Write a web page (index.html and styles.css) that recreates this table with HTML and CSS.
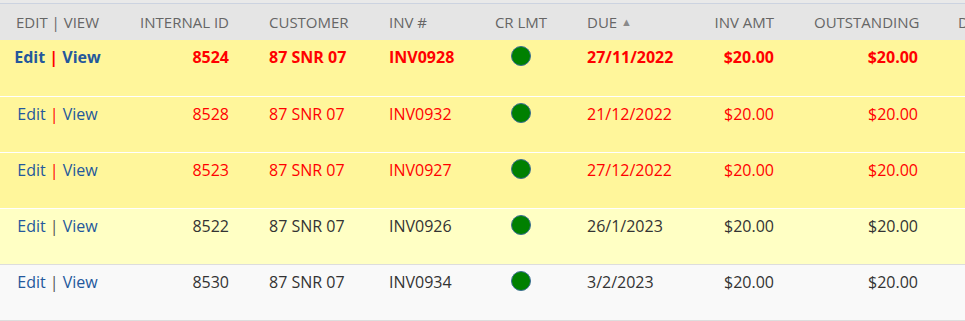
FILE: index.html
```html
<!DOCTYPE html>
<html>
<head>
<meta charset="utf-8">
<link rel="stylesheet" href="styles.css">
</head>
<body>
<div class="topstrip"></div>
<table class="grid">
  <colgroup>
    <col class="w1"><col class="w2"><col class="w3"><col class="w4"><col class="w5"><col class="w6"><col class="w7"><col class="w8"><col class="w9">
  </colgroup>
  <thead>
    <tr>
      <th class="c1">Edit | View</th>
      <th class="right">Internal ID</th>
      <th>Customer</th>
      <th>Inv #</th>
      <th class="center">CR LMT</th>
      <th>Due <span class="sort">&#9650;</span></th>
      <th class="right">Inv Amt</th>
      <th class="right">Outstanding</th>
      <th>Days</th>
    </tr>
  </thead>
  <tbody>
    <tr class="overdue strong">
      <td class="c1"><a class="lnk">Edit</a> <span class="sep">|</span> <a class="lnk">View</a></td>
      <td class="right">8524</td>
      <td>87 SNR 07</td>
      <td>INV0928</td>
      <td class="center"><span class="dot"></span></td>
      <td>27/11/2022</td>
      <td class="right">$20.00</td>
      <td class="right">$20.00</td>
      <td></td>
    </tr>
    <tr class="overdue">
      <td class="c1"><a class="lnk">Edit</a> <span class="sep">|</span> <a class="lnk">View</a></td>
      <td class="right">8528</td>
      <td>87 SNR 07</td>
      <td>INV0932</td>
      <td class="center"><span class="dot"></span></td>
      <td>21/12/2022</td>
      <td class="right">$20.00</td>
      <td class="right">$20.00</td>
      <td></td>
    </tr>
    <tr class="overdue">
      <td class="c1"><a class="lnk">Edit</a> <span class="sep">|</span> <a class="lnk">View</a></td>
      <td class="right">8523</td>
      <td>87 SNR 07</td>
      <td>INV0927</td>
      <td class="center"><span class="dot"></span></td>
      <td>27/12/2022</td>
      <td class="right">$20.00</td>
      <td class="right">$20.00</td>
      <td></td>
    </tr>
    <tr class="pale">
      <td class="c1"><a class="lnk">Edit</a> <span class="sep">|</span> <a class="lnk">View</a></td>
      <td class="right">8522</td>
      <td>87 SNR 07</td>
      <td>INV0926</td>
      <td class="center"><span class="dot"></span></td>
      <td>26/1/2023</td>
      <td class="right">$20.00</td>
      <td class="right">$20.00</td>
      <td></td>
    </tr>
    <tr class="plain">
      <td class="c1"><a class="lnk">Edit</a> <span class="sep">|</span> <a class="lnk">View</a></td>
      <td class="right">8530</td>
      <td>87 SNR 07</td>
      <td>INV0934</td>
      <td class="center"><span class="dot"></span></td>
      <td>3/2/2023</td>
      <td class="right">$20.00</td>
      <td class="right">$20.00</td>
      <td></td>
    </tr>
  </tbody>
</table>
</body>
</html>
```

FILE: styles.css
```css
html, body {
  margin: 0;
  padding: 0;
  background: #ffffff;
  overflow: hidden;
}

body {
  font-family: "Open Sans", "Liberation Sans", sans-serif;
  width: 965px;
}

.topstrip {
  height: 3px;
  background: #e9e9e9;
  border-bottom: 1px solid #ccd3e0;
}

.grid {
  border-collapse: collapse;
  table-layout: fixed;
  width: 1038px;
}

.w1 { width: 115px; }
.w2 { width: 134px; }
.w3 { width: 120px; }
.w4 { width: 106px; }
.w5 { width: 92px; }
.w6 { width: 113px; }
.w7 { width: 114px; }
.w8 { width: 144px; }
.w9 { width: 100px; }

.grid th {
  height: 36px;
  padding: 0 20px;
  background: #e5e5e5;
  color: #666666;
  font-size: 15px;
  font-weight: 400;
  text-transform: uppercase;
  text-align: left;
  vertical-align: middle;
  white-space: nowrap;
  overflow: hidden;
  box-sizing: border-box;
}

.grid td {
  height: 56px;
  padding: 6px 20px 0;
  font-size: 16px;
  line-height: 22px;
  color: #333333;
  vertical-align: top;
  white-space: nowrap;
  box-sizing: border-box;
}

.grid .c1 { text-align: center; padding-left: 0; padding-right: 0; }
.grid .right { text-align: right; }
.grid .center { text-align: center; padding-left: 0; padding-right: 0; }

.sort {
  font-size: 11px;
  color: #8a8a8a;
  position: relative;
  top: -2px;
}

.lnk {
  color: #24589c;
  text-decoration: none;
}

.sep { color: #555555; }

tbody tr { border-bottom: 1px solid #ffffff; }

tr.overdue { background: #fff69b; }
tr.overdue td { color: #ff0000; }
tr.overdue td .lnk { color: #24589c; }
tr.overdue .sep { color: #ff0000; }
tr.strong td { font-weight: 700; }

tr.pale { background: #ffffc4; border-bottom-color: #dddddd; }
tr.plain { background: #f9f9f9; border-bottom-color: #dddddd; }

.dot {
  display: inline-block;
  width: 18px;
  height: 18px;
  border-radius: 50%;
  background: #008000;
  border: 1px solid #3b6e93;
  margin-top: 0;
  vertical-align: top;
}
```
